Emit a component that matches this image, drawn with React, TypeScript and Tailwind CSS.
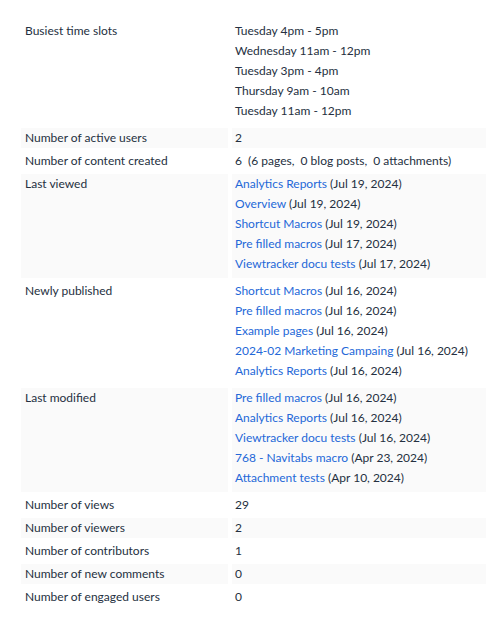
type Entry = { title: string; date: string };

const busiest = [
  "Tuesday 4pm - 5pm",
  "Wednesday 11am - 12pm",
  "Tuesday 3pm - 4pm",
  "Thursday 9am - 10am",
  "Tuesday 11am - 12pm",
];

const lastViewed: Entry[] = [
  { title: "Analytics Reports", date: "Jul 19, 2024" },
  { title: "Overview", date: "Jul 19, 2024" },
  { title: "Shortcut Macros", date: "Jul 19, 2024" },
  { title: "Pre filled macros", date: "Jul 17, 2024" },
  { title: "Viewtracker docu tests", date: "Jul 17, 2024" },
];

const newlyPublished: Entry[] = [
  { title: "Shortcut Macros", date: "Jul 16, 2024" },
  { title: "Pre filled macros", date: "Jul 16, 2024" },
  { title: "Example pages", date: "Jul 16, 2024" },
  { title: "2024-02 Marketing Campaing", date: "Jul 16, 2024" },
  { title: "Analytics Reports", date: "Jul 16, 2024" },
];

const lastModified: Entry[] = [
  { title: "Pre filled macros", date: "Jul 16, 2024" },
  { title: "Analytics Reports", date: "Jul 16, 2024" },
  { title: "Viewtracker docu tests", date: "Jul 16, 2024" },
  { title: "768 - Navitabs macro", date: "Apr 23, 2024" },
  { title: "Attachment tests", date: "Apr 10, 2024" },
];

function Links({ items }: { items: Entry[] }) {
  return (
    <div className="flex flex-col pb-1">
      {items.map((e) => (
        <div key={e.title} className="leading-5 whitespace-nowrap">
          <a href="#" className="text-[#2468d8]">
            {e.title}
          </a>{" "}
          ({e.date})
        </div>
      ))}
    </div>
  );
}

function Row({ label, striped, children }: { label: string; striped?: boolean; children: React.ReactNode }) {
  const bg = striped ? "bg-[#fafafa]" : "bg-white";
  return (
    <>
      <div className={`${bg} pl-1 leading-5`}>{label}</div>
      <div className={`${bg} pl-[3px] leading-5`}>{children}</div>
    </>
  );
}

export default function App() {
  return (
    <main
      className="min-h-[626px] bg-white pt-[21px] pl-[21px] text-[12px] text-[#253041]"
      style={{ fontFamily: "Lato, 'Liberation Sans', sans-serif" }}
    >
      <div className="grid grid-cols-[207px_1fr] gap-x-1 gap-y-[3px]">
        <Row label="Busiest time slots">
          <div className="flex flex-col pb-1">
            {busiest.map((s) => (
              <div key={s}>{s}</div>
            ))}
          </div>
        </Row>
        <Row label="Number of active users" striped>
          2
        </Row>
        <Row label="Number of content created">
          <span className="whitespace-pre">6  (6 pages,  0 blog posts,  0 attachments)</span>
        </Row>
        <Row label="Last viewed" striped>
          <Links items={lastViewed} />
        </Row>
        <Row label="Newly published">
          <Links items={newlyPublished} />
        </Row>
        <Row label="Last modified" striped>
          <Links items={lastModified} />
        </Row>
        <Row label="Number of views">29</Row>
        <Row label="Number of viewers" striped>
          2
        </Row>
        <Row label="Number of contributors">1</Row>
        <Row label="Number of new comments" striped>
          0
        </Row>
        <Row label="Number of engaged users">0</Row>
      </div>
    </main>
  );
}
